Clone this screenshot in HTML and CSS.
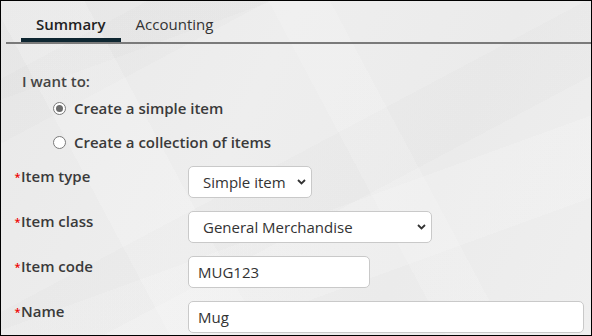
FILE: index.html
```html
<!DOCTYPE html>
<html>
<head>
<meta charset="utf-8">
<title>Item</title>
<link rel="stylesheet" href="styles.css">
</head>
<body>

<div class="frame">
	<!-- tabs -->
	<div class="tabs">
		<div class="tab active">Summary</div>
		<div class="tab">Accounting</div>
	</div>

	<div class="content">
		<div class="intro">I want to:</div>
		<label class="choice first"><input type="radio" name="mode" checked> Create a simple item</label>
		<label class="choice"><input type="radio" name="mode"> Create a collection of items</label>

		<div class="row">
			<div class="label"><span class="req">*</span>Item type</div>
			<div class="select w-type">
				<select><option>Simple item</option></select>
				<svg class="chev" width="9" height="6" viewBox="0 0 9 6"><path d="M1 1l3.5 3.5L8 1" fill="none" stroke="#333" stroke-width="1.8"/></svg>
			</div>
		</div>
		<div class="row">
			<div class="label"><span class="req">*</span>Item class</div>
			<div class="select w-class">
				<select><option>General Merchandise</option></select>
				<svg class="chev" width="9" height="6" viewBox="0 0 9 6"><path d="M1 1l3.5 3.5L8 1" fill="none" stroke="#333" stroke-width="1.8"/></svg>
			</div>
		</div>
		<div class="row">
			<div class="label"><span class="req">*</span>Item code</div>
			<input class="field w-code" type="text" value="MUG123">
		</div>
		<div class="row">
			<div class="label"><span class="req">*</span>Name</div>
			<input class="field w-name" type="text" value="Mug">
		</div>
	</div>
</div>

</body>
</html>
```

FILE: styles.css
```css
html, body {
	margin: 0;
	padding: 0;
	font-family: "Open Sans", "Liberation Sans", sans-serif;
	font-size: 15px;
	color: #333;
}

.frame {
	width: 592px;
	height: 336px;
	box-sizing: border-box;
	border: 1px solid #000;
	background-color: #ececec;
	/* faint facets in the background */
	background-image:
		linear-gradient(62deg, transparent 0 22%, rgba(255,255,255,.16) 22% 34%, transparent 34% 58%, rgba(255,255,255,.14) 58% 66%, transparent 66%),
		linear-gradient(-28deg, transparent 0 40%, rgba(0,0,0,.012) 40% 52%, transparent 52% 78%, rgba(0,0,0,.012) 78% 88%, transparent 88%),
		linear-gradient(160deg, rgba(0,0,0,.012) 0 18%, transparent 18% 60%, rgba(255,255,255,.15) 60% 75%, transparent 75%),
		linear-gradient(115deg, #e9e9e9 0%, #eeeeee 40%, #ebebeb 70%, #efefef 100%);
	overflow: hidden;
}

/* tabs */
.tabs {
	display: flex;
	margin-left: 5px;
	padding-left: 15px;
	border-bottom: 2px solid #7a7a7a;
}
.tab {
	padding: 13px 15px 0;
	height: 24px;
	line-height: 20px;
	border-bottom: 4px solid transparent;
	color: #333;
}
.tab.active {
	font-weight: 600;
	color: #222;
	border-bottom-color: #0e2631;
}

/* form */
.content {
	padding: 27px 6px 0 13px;
}
.intro {
	line-height: 20px;
	padding-left: 8px;
	font-weight: 600;
	color: #444;
}
.choice {
	display: flex;
	align-items: center;
	line-height: 20px;
	margin: 14px 0 0 39px;
	font-weight: 600;
	color: #3a3a3a;
}
.choice.first {
	margin-top: 7px;
}
.choice input {
	-webkit-appearance: none;
	appearance: none;
	width: 13px;
	height: 13px;
	margin: 0 8px 0 0;
	border: 1px solid #7a7a7a;
	border-radius: 50%;
	background: #fff;
	box-sizing: border-box;
	position: relative;
}
.choice input:checked::after {
	content: "";
	position: absolute;
	left: 2px;
	top: 2px;
	width: 7px;
	height: 7px;
	border-radius: 50%;
	background: #6c6c6c;
}

.row {
	display: flex;
	align-items: flex-start;
	margin-top: 13px;
}
.choice + .row {
	margin-top: 14px;
}
.label {
	width: 174px;
	line-height: 20px;
	font-weight: 600;
	color: #3a3a3a;
}
.req {
	display: inline-block;
	width: 7px;
	color: #e00;
	font-size: 11px;
	line-height: 11px;
	vertical-align: 1px;
	text-align: center;
}

.select {
	position: relative;
}
.select select,
.field {
	box-sizing: border-box;
	height: 32px;
	border: 1px solid #c9c9c9;
	border-radius: 5px;
	background: #fff;
	font-family: inherit;
	font-size: 15px;
	color: #333;
	margin: 0;
	outline: none;
}
.select select {
	-webkit-appearance: none;
	appearance: none;
	width: 100%;
	padding: 0 0 0 14px;
}
.chev {
	position: absolute;
	right: 6px;
	top: 13px;
	pointer-events: none;
}
.field {
	padding: 0 9px;
}
.w-type { width: 124px; }
.w-class { width: 244px; }
.w-code { width: 182px; }
.w-name { width: 396px; }
```
